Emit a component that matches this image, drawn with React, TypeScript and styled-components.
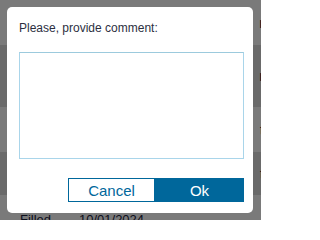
import React from 'react'
import styled, { createGlobalStyle } from 'styled-components'

const GlobalStyle = createGlobalStyle`
  html, body {
    margin: 0;
    padding: 0;
    width: 261px;
    height: 220px;
    overflow: hidden;
    font-family: 'Liberation Sans', Arial, sans-serif;
  }
`

const ROWS = [
  { h: 45, shade: false, label: '', value: '', tail: 'r' },
  { h: 62, shade: true, label: '', value: '', tail: 'r' },
  { h: 45, shade: false, label: '', value: '', tail: 't' },
  { h: 43, shade: true, label: '', value: '', tail: 't' },
  { h: 40, shade: false, label: 'Filled', value: '10/01/2024', tail: '' },
]

const Page = styled.div`
  position: relative;
  width: 261px;
  height: 220px;
  overflow: hidden;
  background: #ffffff;
`

const Table = styled.div`
  display: flex;
  flex-direction: column;
`

const Row = styled.div<{ $shade: boolean; $h: number }>`
  height: ${(p) => p.$h}px;
  box-sizing: border-box;
  display: grid;
  grid-template-columns: 20px 59px 1fr auto;
  align-items: center;
  background: ${(p) => (p.$shade ? '#dedede' : '#ffffff')};
  color: #1a2240;
  font-size: 13px;
  &:last-child {
    align-items: start;
    padding-top: 17px;
  }
`

const Cell = styled.span`
  white-space: nowrap;
`

const Tail = styled.span`
  margin-right: -3px;
  font-size: 14px;
`

const Overlay = styled.div`
  position: absolute;
  inset: 0;
  background: rgba(0, 0, 0, 0.52);
  display: flex;
  align-items: flex-start;
  justify-content: flex-start;
  padding: 7px;
`

const Dialog = styled.div`
  width: 246px;
  height: 206px;
  box-sizing: border-box;
  background: #ffffff;
  border-radius: 5px;
  padding: 14px 9px 11px 12px;
  display: flex;
  flex-direction: column;
`

const Label = styled.div`
  font-size: 12px;
  line-height: 15px;
  color: #2c2f3f;
`

const Comment = styled.textarea`
  margin-top: 16px;
  width: 225px;
  height: 107px;
  box-sizing: border-box;
  border: 1px solid #a9d5ea;
  border-top-color: #9ccadd;
  outline: none;
  resize: none;
  padding: 4px;
  font-family: inherit;
`

const Actions = styled.div`
  margin-top: auto;
  display: flex;
  justify-content: flex-end;
`

const ActionButton = styled.button<{ $primary?: boolean }>`
  height: 24px;
  width: ${(p) => (p.$primary ? 89 : 87)}px;
  box-sizing: border-box;
  border: 1px solid #00679b;
  background: ${(p) => (p.$primary ? '#00679b' : '#ffffff')};
  color: ${(p) => (p.$primary ? '#ffffff' : '#00679b')};
  font-family: 'Liberation Sans', Arial, sans-serif;
  font-size: 15px;
  padding: 0;
  cursor: pointer;
`

export default function App() {
  return (
    <>
      <GlobalStyle />
      <Page>
        <Table>
          {ROWS.map((r, i) => (
            <Row key={i} $shade={r.shade} $h={r.h}>
              <span />
              <Cell>{r.label}</Cell>
              <Cell>{r.value}</Cell>
              <Tail>{r.tail}</Tail>
            </Row>
          ))}
        </Table>
        <Overlay>
          <Dialog>
            <Label>Please, provide comment:</Label>
            <Comment />
            <Actions>
              <ActionButton>Cancel</ActionButton>
              <ActionButton $primary>Ok</ActionButton>
            </Actions>
          </Dialog>
        </Overlay>
      </Page>
    </>
  )
}
